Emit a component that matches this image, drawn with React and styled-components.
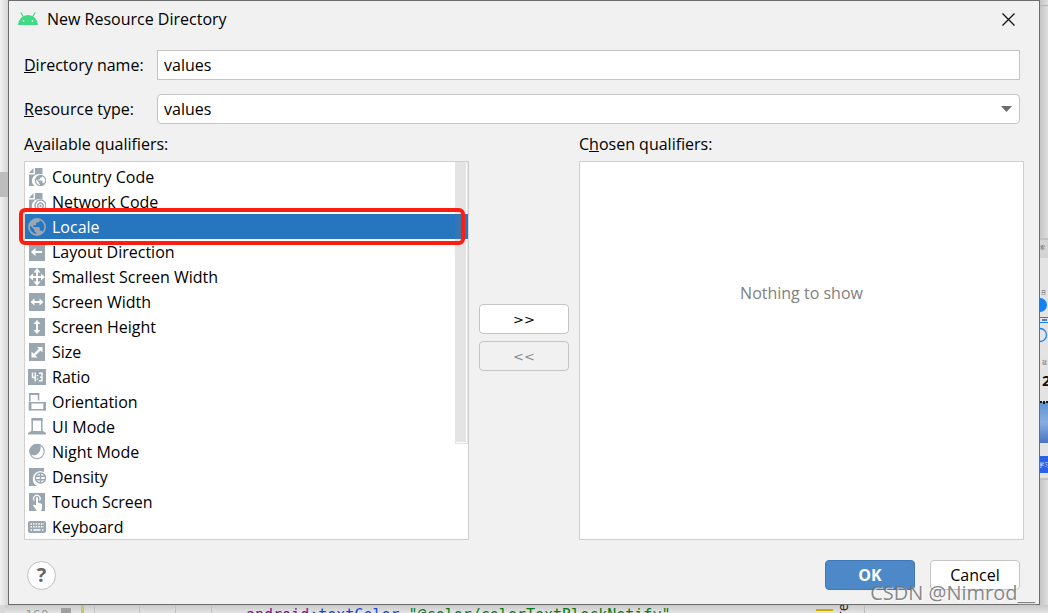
import React from "react";
import styled, { createGlobalStyle } from "styled-components";

const GlobalStyle = createGlobalStyle`
  *, *::before, *::after { box-sizing: border-box; }
  body {
    margin: 0;
    background: #e6e6e6;
    color: #000;
    font: 16px/20px "Open Sans", "Noto Sans", sans-serif;
  }
  button, input, select { font: inherit; color: inherit; margin: 0; }
`;

const Page = styled.div`
  position: relative;
  display: flex;
  flex-direction: column;
  height: 100vh;
  overflow: hidden;
`;

const Stage = styled.div`
  display: flex;
`;

const LeftStrip = styled.div`
  flex: 0 0 8px;
  padding-top: 172px;
  background: linear-gradient(to right, #f2f2f2, #d6d6d6);
`;

const ScrollMark = styled.div`
  height: 25px;
  background: #bdbdbd;
`;

const RightStrip = styled.div`
  flex: 0 0 8px;
  background: linear-gradient(to right, #c6c6c6, #dedede);
`;

const StripTop = styled.div`
  height: 6px;
  border-bottom: 1px solid #b4b4b4;
  margin-bottom: 232px;
`;

const Preview = styled.svg`
  display: block;
`;

const Dialog = styled.main`
  flex: 1;
  min-width: 0;
  display: flex;
  flex-direction: column;
  border: 1px solid #6c6c6c;
  background: #f1f1f1;
`;

const TitleBar = styled.header`
  display: flex;
  align-items: center;
  height: 36px;
  padding: 0 20px 0 9px;
`;

const Title = styled.h1`
  flex: 1;
  margin: 0 0 0 9px;
  font-size: 16px;
  font-weight: 400;
`;

const CloseButton = styled.button`
  display: flex;
  padding: 4px;
  border: 0;
  background: none;
`;

const Form = styled.div`
  display: grid;
  grid-template-columns: 133px 1fr;
  align-items: center;
  row-gap: 14px;
  padding: 13px 19px 0 15px;
`;

const Label = styled.label`
  display: block;
`;

const TextInput = styled.input`
  width: 100%;
  height: 30px;
  padding: 0 6px;
  border: 1px solid #c4c4c4;
  border-radius: 0;
  background: #fff;
`;

const SelectBox = styled.div`
  display: grid;
  align-items: center;

  > * { grid-area: 1 / 1; }
  > svg { justify-self: end; margin-right: 8px; pointer-events: none; }
`;

const Select = styled.select`
  appearance: none;
  width: 100%;
  height: 30px;
  padding: 0 6px;
  border: 1px solid #c4c4c4;
  border-radius: 4px;
  background: #fff;
`;

const Columns = styled.div`
  display: grid;
  grid-template-columns: 1fr 90px 1fr;
  column-gap: 10px;
  padding: 10px 15px 0;
`;

const Column = styled.section`
  display: flex;
  flex-direction: column;
  gap: 7px;
`;

const ColumnTitle = styled.h2`
  margin: 0;
  font-size: 16px;
  font-weight: 400;
`;

const List = styled.ul`
  position: relative;
  flex: 1;
  margin: 0;
  padding: 2px 0 0;
  list-style: none;
  border: 1px solid #cfcfcf;
  background: #fff;
`;

const Item = styled.li`
  position: relative;
  display: flex;
  align-items: center;
  gap: 6px;
  height: 25px;
  padding: 0 3px;
  background: ${(p) => (p.$selected ? "#2675bf" : "transparent")};
  color: ${(p) => (p.$selected ? "#fff" : "#000")};
`;

const ItemIcon = styled.svg`
  flex: 0 0 18px;
  color: #9aa7b0;
`;

const ScrollThumb = styled.div`
  position: absolute;
  top: 0;
  right: 0;
  width: 13px;
  height: calc(75% - 1px);
  border: 1px solid rgba(120, 120, 120, 0.2);
  background: rgba(120, 120, 120, 0.2) content-box;
  padding: 0 1px 1px 0;
`;

const Annotation = styled.div`
  position: absolute;
  z-index: 1;
  inset: -6px 3px -6px -6px;
  border: 4px solid #ff1d12;
  border-radius: 6px;
`;

const EmptyBox = styled.div`
  flex: 1;
  padding-top: 121px;
  border: 1px solid #cfcfcf;
  background: #fff;
  color: #808080;
  text-align: center;
`;

const MoveButtons = styled.div`
  display: flex;
  flex-direction: column;
  justify-content: center;
  gap: 7px;
`;

const Button = styled.button`
  width: 90px;
  height: 30px;
  padding: 0;
  border: 1px solid ${(p) => (p.$primary ? "#3f78b4" : "#c4c4c4")};
  border-radius: 4px;
  background: ${(p) => (p.$primary ? "#4d89c9" : "#fff")};
  color: ${(p) => (p.$primary ? "#fff" : "#000")};
  font-weight: ${(p) => (p.$primary ? 700 : 400)};

  &:disabled { background: #f1f1f1; color: #8c8c8c; }
`;

const ArrowButton = styled(Button)`
  padding-top: 2px;
  font-family: "DejaVu Sans", sans-serif;
  font-size: 13px;
`;

const Footer = styled.footer`
  display: flex;
  align-items: center;
  gap: 15px;
  padding: 20px 19px 14px 18px;
`;

const HelpButton = styled.button`
  width: 29px;
  height: 29px;
  margin-right: auto;
  padding: 0;
  border: 1px solid #c0c0c0;
  border-radius: 50%;
  background: #fff;
  color: #666;
  font-size: 20px;
  font-weight: 700;
`;

const Watermark = styled.div`
  position: absolute;
  right: 13px;
  bottom: 8px;
  color: rgba(115, 115, 115, 0.85);
  font-size: 20px;
  line-height: 24px;
  text-shadow: 1px 1px 0 rgba(255, 255, 255, 0.6);
`;

const Editor = styled.div`
  flex: 1;
  min-height: 0;
  display: flex;
  overflow: hidden;
  background: linear-gradient(#c8c8c8, #e4e4e4 8px);
  font: 15px/20px "DejaVu Sans Mono", monospace;
`;

const LineNumber = styled.div`
  width: 61px;
  padding-left: 20px;
  border-left: 5px solid #d8d8d8;
  color: #999;
  font-size: 13px;
`;

const GutterMark = styled.div`
  width: 10px;
  height: 12px;
  margin: 3px 10px 0 0;
  background: #a0a0a0;
`;

const ChangeBar = styled.div`
  width: 3px;
  background: #c3c873;
`;

const Guide = styled.div`
  width: ${(p) => p.$width}px;
  border-right: 1px solid #c2c2c2;
`;

const Code = styled.code`
  flex: 1;
  padding-left: 34px;
  font: inherit;
  color: #067d17;
`;

const Namespace = styled.span`
  color: #871094;
`;

const Attribute = styled.span`
  color: #174ad4;
`;

const WarningMark = styled.div`
  width: 17px;
  height: 2px;
  margin-top: 4px;
  background: #ccac00;
`;

const SideTab = styled.div`
  width: 32px;
  height: 12px;
  margin-right: 183px;
  border-left: 1px solid #bbb;
  color: #222;
  font: 14px/20px "Open Sans", sans-serif;
  writing-mode: vertical-rl;
  transform: rotate(180deg);
`;

const page = "M1 5 5.500 0V5ZM7 0H14.500V7.500A6.500 6.500 0 0 0 6.500 18H1V6.500H7Z";
const globe = "M9 1.5a7.5 7.5 0 1 0 0 15 7.5 7.5 0 0 0 0-15Zm-.7 13.4A6 6 0 0 1 3.2 7.7L6.8 11.3v.8a1.5 1.5 0 0 0 1.5 1.5Zm5.2-1.9a1.5 1.5 0 0 0-1.4-1h-.8V9.8a.8.8 0 0 0-.8-.8H6V7.5h1.5a.8.8 0 0 0 .8-.8V5.2h1.5a1.5 1.5 0 0 0 1.5-1.5v-.3a6 6 0 0 1 2.2 9.6Z";
const Tile = () => <path fill="currentColor" d="M1 0h16v18H1z" />;

const drawings = {
  country: (
    <>
      <path fill="currentColor" d={page} />
      <circle cx="12.500" cy="12.500" r="6.500" fill="#fff" />
      <g transform="translate(5.700 5.700) scale(.76)"><path fill="currentColor" d={globe} /></g>
    </>
  ),
  network: (
    <>
      <path fill="currentColor" d={page} />
      <circle cx="12.500" cy="12.500" r="6.500" fill="#fff" />
      <g fill="none" stroke="currentColor" strokeWidth="1.400">
        <path d="M8.700 16.500a5.500 5.500 0 1 1 7.600 0M10.800 15.200a2.900 2.900 0 1 1 3.400 0" />
      </g>
      <circle cx="12.500" cy="13" r="1.200" fill="currentColor" />
    </>
  ),
  locale: <path fill="currentColor" transform="translate(-1.800 -1.800) scale(1.200)" d={globe} />,
  direction: (
    <><Tile /><path fill="#fff" d="M3 9 7.5 5V8H14V10H7.5V13Z" /></>
  ),
  smallest: (
    <><Tile /><path fill="#fff" d="M9 0 12.500 4.500H10V8H13V5.500L17 9 13 12.500V10H10V13.500H12.500L9 18 5.500 13.500H8V10H5V12.500L1 9 5 5.500V8H8V4.500H5.500Z" /></>
  ),
  width: (
    <><Tile /><path fill="#fff" d="M2.5 9 6.5 5.5V8H11.5V5.5L15.5 9 11.5 12.5V10H6.5V12.5Z" /></>
  ),
  height: (
    <><Tile /><path fill="#fff" d="M9 2 12.5 6H10V12H12.5L9 16 5.5 12H8V6H5.5Z" /></>
  ),
  size: (
    <><Tile /><path fill="#fff" d="M9 4H14.5V9.5L12.5 7.5 7.5 12.5 9.5 14.5H3.5V8.5L5.7 10.7 10.8 5.8Z" /></>
  ),
  ratio: (
    <>
      <path fill="currentColor" d="M0 1h18v16H0z" />
      <path fill="none" stroke="#fff" strokeWidth="1.400" d="M4.500 4.500V9.500H8M7.200 4.500V13.500M11 5.200H14V12.800H11M12 9.200H14" />
      <path fill="#fff" d="M8.800 7h1.300v1.300H8.800zM8.800 10.500h1.300v1.300H8.800z" />
    </>
  ),
  orientation: (
    <g fill="none" stroke="currentColor">
      <path strokeWidth="1.500" d="M1.800 8.500V.8H10.500V7.500" />
      <path strokeWidth="2" d="M1 1H11.200" />
      <path strokeWidth="1.500" d="M1.500 9.800H17V16.800H1.500Z" />
      <path strokeWidth="2.500" d="M2.200 9V17.500M16.500 9V17.500" />
    </g>
  ),
  ui: (
    <>
      <path fill="none" stroke="currentColor" strokeWidth="1.500" d="M4.200 13V1.500H13.800V13" />
      <path fill="currentColor" d="M3.500 0H14.500V2.500H3.500ZM3 13H15L18 15V16.500H0V15Z" />
    </>
  ),
  night: (
    <>
      <circle cx="9" cy="8.500" r="7.200" fill="none" stroke="currentColor" strokeWidth="1.100" />
      <path fill="currentColor" d="M12.500 2.500A7 7 0 0 0 2.500 11.500C8 14 13.500 9.500 12.500 2.500Z" />
    </>
  ),
  density: (
    <>
      <path fill="currentColor" d="M1 0H16V4A7 7 0 0 0 9 18H1Z" />
      <circle cx="12.500" cy="10" r="6.500" fill="#fff" />
      <g fill="none" stroke="currentColor" strokeWidth="1.400">
        <circle cx="12.500" cy="10" r="5" />
        <path d="M12.500 5V15M7.500 8.300H17.500M7.500 11.700H17.500" />
      </g>
    </>
  ),
  touch: (
    <>
      <Tile />
      <path fill="none" stroke="#fff" strokeWidth="1.200" d="M6.200 7.500A3.300 3.300 0 1 1 11.500 7.500" />
      <path fill="#fff" d="M8 5A1 1 0 0 1 10 5V9.500L14 11V15L13 18H9L5 12.500 6 11.500 8 12.500Z" />
    </>
  ),
  keyboard: (
    <>
      <rect x="0" y="3" width="18" height="12" rx="2" fill="currentColor" />
      <path fill="none" stroke="#fff" strokeWidth="1.400" strokeDasharray="1.500 1.100" d="M2.500 6H16M2.500 8.700H16" />
      <path fill="none" stroke="#fff" strokeWidth="1.400" d="M2.500 12H4M5.300 12H12.500M14 12H15.500" />
    </>
  ),
};

const qualifiers = [
  ["country", "Country Code"],
  ["network", "Network Code"],
  ["locale", "Locale"],
  ["direction", "Layout Direction"],
  ["smallest", "Smallest Screen Width"],
  ["width", "Screen Width"],
  ["height", "Screen Height"],
  ["size", "Size"],
  ["ratio", "Ratio"],
  ["orientation", "Orientation"],
  ["ui", "UI Mode"],
  ["night", "Night Mode"],
  ["density", "Density"],
  ["touch", "Touch Screen"],
  ["keyboard", "Keyboard"],
];

const AndroidIcon = () => (
  <svg width="20" height="14" viewBox="0 0 20 14" aria-hidden="true">
    <path fill="#3ddc84" d="M0 13A10 10 0 0 1 20 13Z" />
    <path stroke="#3ddc84" strokeWidth="1.200" strokeLinecap="round" d="M5.500 5 3 .8M14.500 5 17 .8" />
    <circle cx="5.500" cy="9" r=".9" fill="#f1f1f1" />
    <circle cx="14.500" cy="9" r=".9" fill="#f1f1f1" />
  </svg>
);

const PhonePreview = () => (
  <Preview width="8" height="242" viewBox="0 0 8 242" aria-hidden="true">
    <defs>
      <linearGradient id="sky" x1="0" y1="0" x2="0" y2="1">
        <stop offset="0" stopColor="#5d93d3" />
        <stop offset=".5" stopColor="#85aee2" />
        <stop offset="1" stopColor="#4a74c4" />
      </linearGradient>
    </defs>
    <path fill="#e3e3e3" d="M0 0H8V242H0Z" />
    <path fill="#d4d4d4" d="M0 0H8V20H0Z" />
    <path fill="#c2c2c2" d="M0 0H8V2H0ZM0 240H8V242H0Z" />
    <g fill="#555" fontFamily="Noto Sans CJK SC, sans-serif" fontSize="5">
      <text x="0" y="11">索</text>
      <text x="1" y="56">日</text>
      <text x="2" y="126">就</text>
    </g>
    <circle cx="0" cy="67" r="7" fill="#1382f5" />
    <path fill="#1382f5" d="M0 79H8V80H0ZM0 84H8V85H0Z" />
    <path fill="#5c7da6" d="M2 81H7V83H2Z" />
    <circle cx="0" cy="97" r="6.500" fill="none" stroke="#1382f5" strokeWidth="1.300" />
    <text x="2" y="148" fill="#111" fontFamily="Open Sans, sans-serif" fontSize="15" fontWeight="700">2</text>
    <path fill="url(#sky)" d="M0 164H8V205H0Z" />
    <path fill="#181818" d="M0 163H2V165H0ZM3 163H5V166H3ZM6 163H8V165H6Z" />
    <path fill="#2b62e5" d="M0 218H8V235H0Z" />
    <text x="-2" y="229" fill="#d5e0ff" fontFamily="Noto Sans CJK SC, sans-serif" fontSize="6">学习</text>
  </Preview>
);

export default function App() {
  return (
    <Page>
      <GlobalStyle />
      <Stage>
        <LeftStrip><ScrollMark /></LeftStrip>
        <Dialog>
          <TitleBar>
            <AndroidIcon />
            <Title>New Resource Directory</Title>
            <CloseButton type="button" aria-label="Close">
              <svg width="13" height="13" viewBox="0 0 13 13">
                <path stroke="#111" strokeWidth="1.300" d="M.5 .5 12.500 12.500M12.500 .5 .5 12.500" />
              </svg>
            </CloseButton>
          </TitleBar>

          <Form>
            <Label htmlFor="directory"><u>D</u>irectory name:</Label>
            <TextInput id="directory" type="text" defaultValue="values" />
            <Label htmlFor="type"><u>R</u>esource type:</Label>
            <SelectBox>
              <Select id="type" defaultValue="values">
                <option>values</option>
              </Select>
              <svg width="11" height="6" viewBox="0 0 11 6" aria-hidden="true">
                <path fill="#6e6e6e" d="M0 0H11L5.500 6Z" />
              </svg>
            </SelectBox>
          </Form>

          <Columns>
            <Column>
              <ColumnTitle id="available">A<u>v</u>ailable qualifiers:</ColumnTitle>
              <List role="listbox" aria-labelledby="available" tabIndex={0}>
                {qualifiers.map(([icon, name]) => (
                  <Item key={icon} role="option" aria-selected={icon === "locale"} $selected={icon === "locale"}>
                    <ItemIcon width="18" height="18" viewBox="0 0 18 18" aria-hidden="true">
                      {drawings[icon]}
                    </ItemIcon>
                    {name}
                    {icon === "locale" && <Annotation />}
                  </Item>
                ))}
                <ScrollThumb />
              </List>
            </Column>
            <MoveButtons>
              <ArrowButton type="button">&gt;&gt;</ArrowButton>
              <ArrowButton type="button" disabled>&lt;&lt;</ArrowButton>
            </MoveButtons>
            <Column>
              <ColumnTitle>C<u>h</u>osen qualifiers:</ColumnTitle>
              <EmptyBox>Nothing to show</EmptyBox>
            </Column>
          </Columns>

          <Footer>
            <HelpButton type="button" aria-label="Help">?</HelpButton>
            <Button type="button" $primary>OK</Button>
            <Button type="button">Cancel</Button>
          </Footer>
        </Dialog>
        <RightStrip>
          <StripTop />
          <PhonePreview />
        </RightStrip>
      </Stage>

      <Editor>
        <LineNumber>160</LineNumber>
        <GutterMark />
        <ChangeBar />
        <Guide $width={11} />
        <Guide $width={45} />
        <Guide $width={36} />
        <Guide $width={36} />
        <Code>
          <Namespace>android</Namespace>
          <Attribute>:textColor</Attribute>="@color/colorTextBlockNotify"
        </Code>
        <WarningMark />
        <SideTab>re</SideTab>
      </Editor>
      <Watermark>CSDN @Nimrod__</Watermark>
    </Page>
  );
}
